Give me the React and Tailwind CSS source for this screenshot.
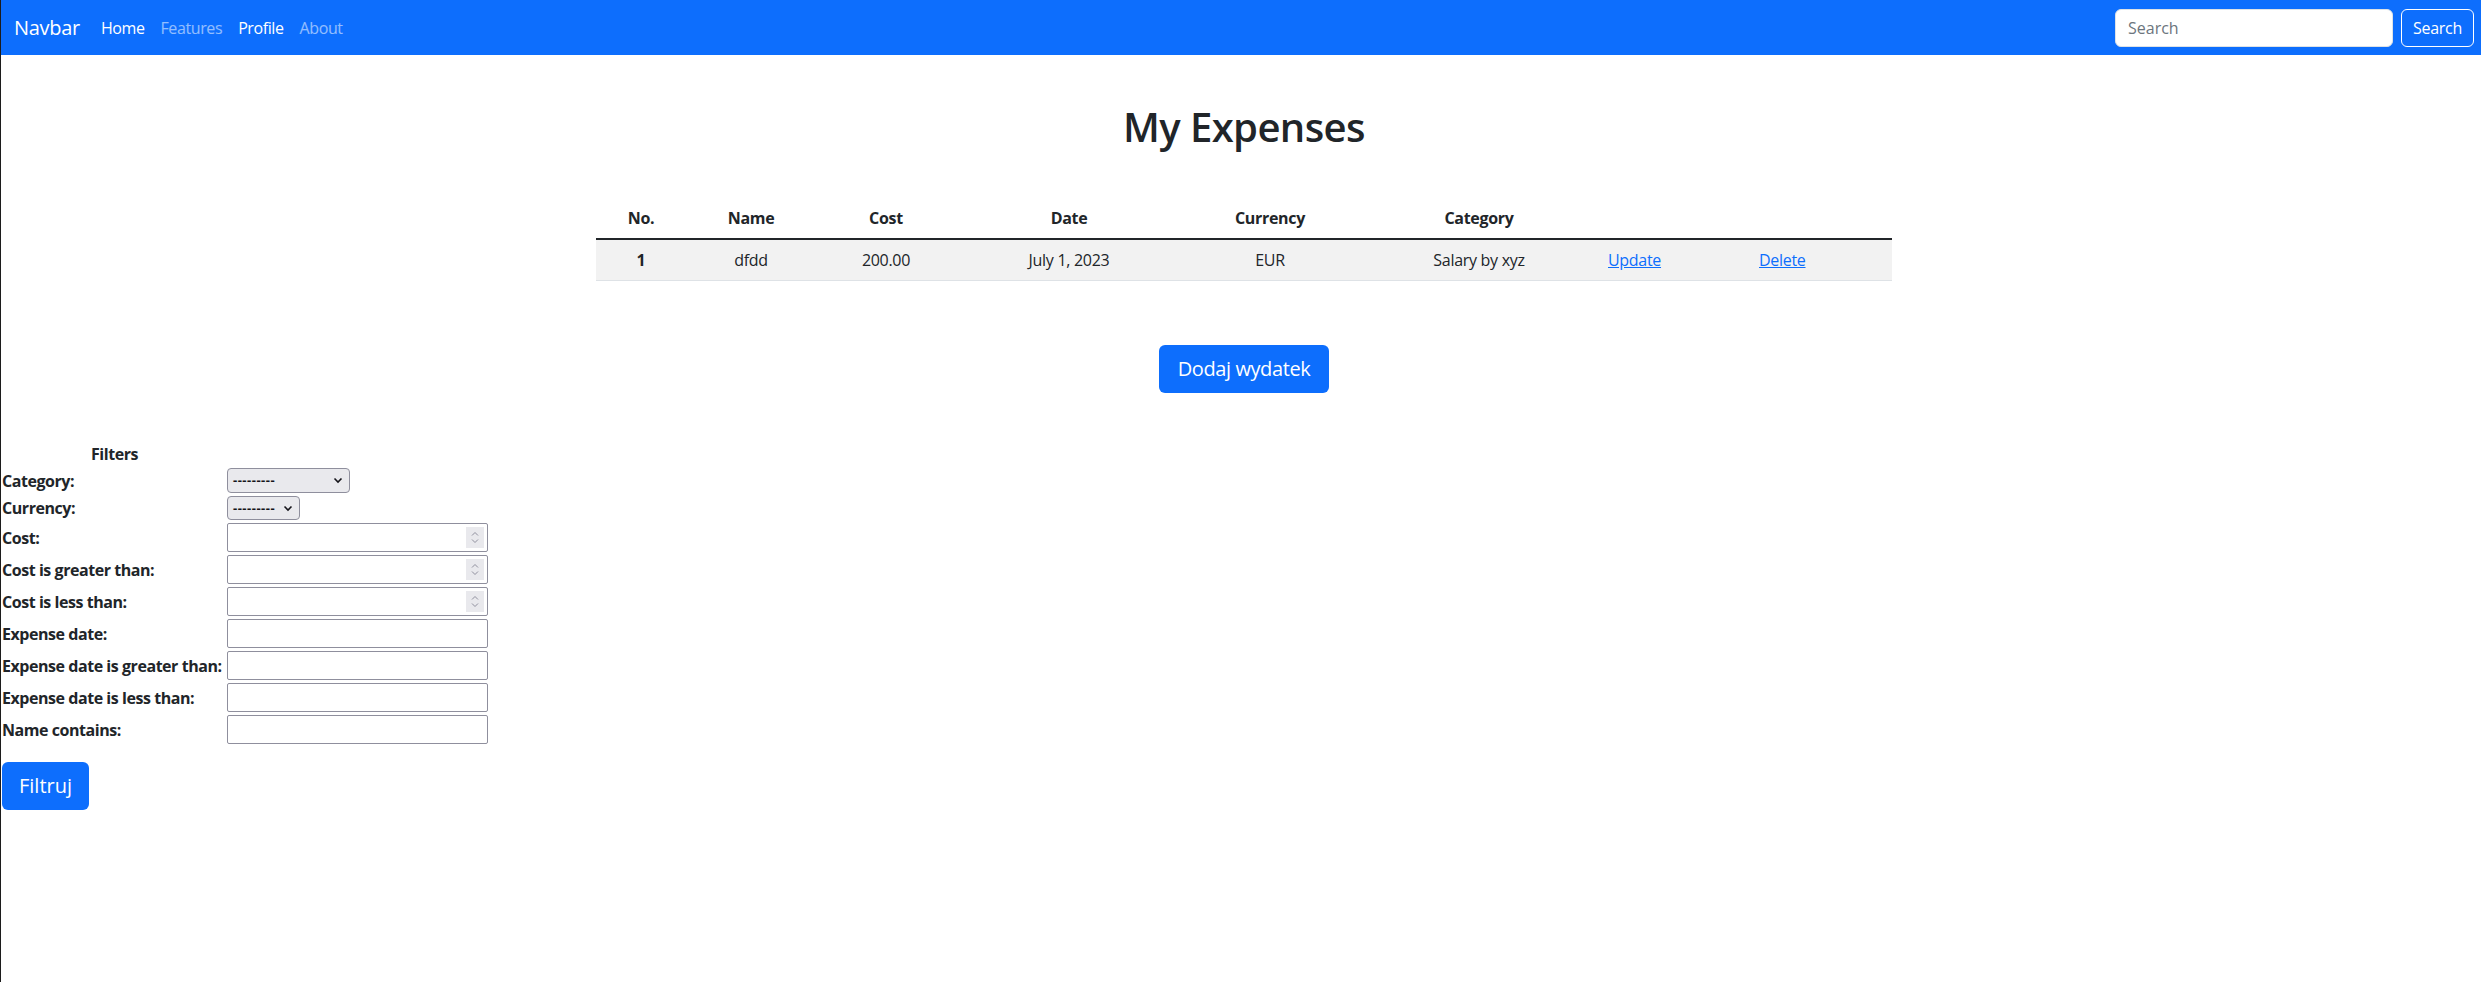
import React from 'react';

const font = { fontFamily: '"Open Sans", "Noto Sans", sans-serif' };

const expenses = [
  { id: 1, name: 'dfdd', cost: '200.00', date: 'July 1, 2023', currency: 'EUR', category: 'Salary by xyz' },
];

function Spinner() {
  return (
    <span className="absolute right-[3px] top-[3px] bottom-[3px] flex w-[18px] flex-col items-center justify-center bg-[#e9e9ed]">
      <svg width="8" height="5" viewBox="0 0 8 5" fill="none" stroke="#8f8f9d" strokeWidth="1">
        <path d="M1 4.5 4 1.5 7 4.5" />
      </svg>
      <svg width="8" height="5" viewBox="0 0 8 5" fill="none" stroke="#8f8f9d" strokeWidth="1" className="mt-[3px]">
        <path d="M1 0.5 4 3.5 7 0.5" />
      </svg>
    </span>
  );
}

function FakeSelect({ width }) {
  return (
    <div
      className="flex items-center justify-between rounded-[4px] border border-[#8f8f9d] bg-[#e9e9ed] pl-[5px] pr-[6px] text-[13px] font-bold text-[#15141a]"
      style={{ width, height: '100%' }}
    >
      <span className="leading-none tracking-[0.5px]">---------</span>
      <svg width="10" height="7" viewBox="0 0 10 7" fill="none" stroke="#15141a" strokeWidth="1.6">
        <path d="M1.5 1.5 5 5 8.5 1.5" />
      </svg>
    </div>
  );
}

function TextBox({ number }) {
  return (
    <div className="relative h-full w-[261px] rounded-[2px] border border-[#8f8f9d] bg-white">
      {number && <Spinner />}
    </div>
  );
}

const filterRows = [
  { label: 'Category:', kind: 'select', width: 123, h: 'h-[25px]' },
  { label: 'Currency:', kind: 'select', width: 73, h: 'h-[24px]' },
  { label: 'Cost:', kind: 'number', h: 'h-[29px]' },
  { label: 'Cost is greater than:', kind: 'number', h: 'h-[29px]' },
  { label: 'Cost is less than:', kind: 'number', h: 'h-[29px]' },
  { label: 'Expense date:', kind: 'text', h: 'h-[29px]' },
  { label: 'Expense date is greater than:', kind: 'text', h: 'h-[29px]' },
  { label: 'Expense date is less than:', kind: 'text', h: 'h-[29px]' },
  { label: 'Name contains:', kind: 'text', h: 'h-[29px]' },
];

export default function App() {
  return (
    <div className="min-h-[982px] border-l border-[#1c1c1c] bg-white text-[#212529]" style={font}>
      <nav className="flex h-[55px] items-center bg-[#0d6efd] pl-[13px] pr-[7px]">
        <span className="mr-[13px] text-[20px] tracking-[-0.3px] text-white">Navbar</span>
        <div className="flex text-[16px] tracking-[-0.4px]">
          <a className="px-2 text-white">Home</a>
          <a className="px-2 text-white/55">Features</a>
          <a className="px-2 text-white">Profile</a>
          <a className="px-2 text-white/55">About</a>
        </div>
        <div className="ml-auto flex items-center gap-2">
          <div className="flex h-[38px] w-[278px] items-center rounded-[6px] border border-[#dee2e6] bg-white px-3 text-[16px] text-[#6c757d]">
            Search
          </div>
          <div className="flex h-[38px] w-[73px] items-center justify-center rounded-[6px] border border-white text-[16px] tracking-[-0.3px] text-white">
            Search
          </div>
        </div>
      </nav>

      <div className="ml-[595px] w-[1296px]">
        <h1 className="mt-[48px] text-center text-[40px] font-semibold leading-[48px] tracking-[-0.6px]">My Expenses</h1>

        <table className="mt-[47px] w-full table-fixed text-[16px] tracking-[-0.3px]">
          <colgroup>
            <col className="w-[90px]" />
            <col className="w-[130px]" />
            <col className="w-[140px]" />
            <col className="w-[226px]" />
            <col className="w-[176px]" />
            <col className="w-[242px]" />
            <col className="w-[151px]" />
            <col className="w-[141px]" />
          </colgroup>
          <thead>
            <tr className="border-b-2 border-[#212529]">
              <th className="py-2 text-center font-bold">No.</th>
              <th className="py-2 text-center font-bold">Name</th>
              <th className="py-2 text-center font-bold">Cost</th>
              <th className="py-2 text-center font-bold">Date</th>
              <th className="py-2 text-center font-bold">Currency</th>
              <th className="py-2 text-center font-bold">Category</th>
              <th className="py-2" />
              <th className="py-2" />
            </tr>
          </thead>
          <tbody>
            {expenses.map((e) => (
              <tr key={e.id} className="border-b border-[#dee2e6] bg-[#f2f2f2]">
                <th className="py-2 text-center font-bold">{e.id}</th>
                <td className="py-2 text-center">{e.name}</td>
                <td className="py-2 text-center">{e.cost}</td>
                <td className="py-2 text-center">{e.date}</td>
                <td className="py-2 text-center">{e.currency}</td>
                <td className="py-2 text-center">{e.category}</td>
                <td className="px-2 py-2">
                  <a className="text-[#0d6efd] underline">Update</a>
                </td>
                <td className="px-2 py-2">
                  <a className="text-[#0d6efd] underline">Delete</a>
                </td>
              </tr>
            ))}
          </tbody>
        </table>

        <div className="mt-[64px] flex justify-center">
          <button className="h-[48px] w-[170px] rounded-[6px] bg-[#0d6efd] text-[20px] tracking-[-0.4px] text-white">
            Dodaj wydatek
          </button>
        </div>
      </div>

      <div className="mt-[50px] pl-[1px] text-[16px] font-bold tracking-[-0.45px]">
        <div className="flex h-[22px] w-[225px] items-center justify-center">Filters</div>
        <div className="mt-[3px] flex flex-col gap-[3px]">
          {filterRows.map((r) => (
            <div key={r.label} className={`flex items-center ${r.h}`}>
              <span className="w-[225px] shrink-0 whitespace-nowrap leading-none">{r.label}</span>
              {r.kind === 'select' ? (
                <FakeSelect width={r.width} />
              ) : (
                <TextBox number={r.kind === 'number'} />
              )}
            </div>
          ))}
        </div>
        <button className="mt-[18px] h-[48px] w-[87px] rounded-[6px] bg-[#0d6efd] text-[20px] font-normal tracking-normal text-white">
          Filtruj
        </button>
      </div>
    </div>
  );
}
